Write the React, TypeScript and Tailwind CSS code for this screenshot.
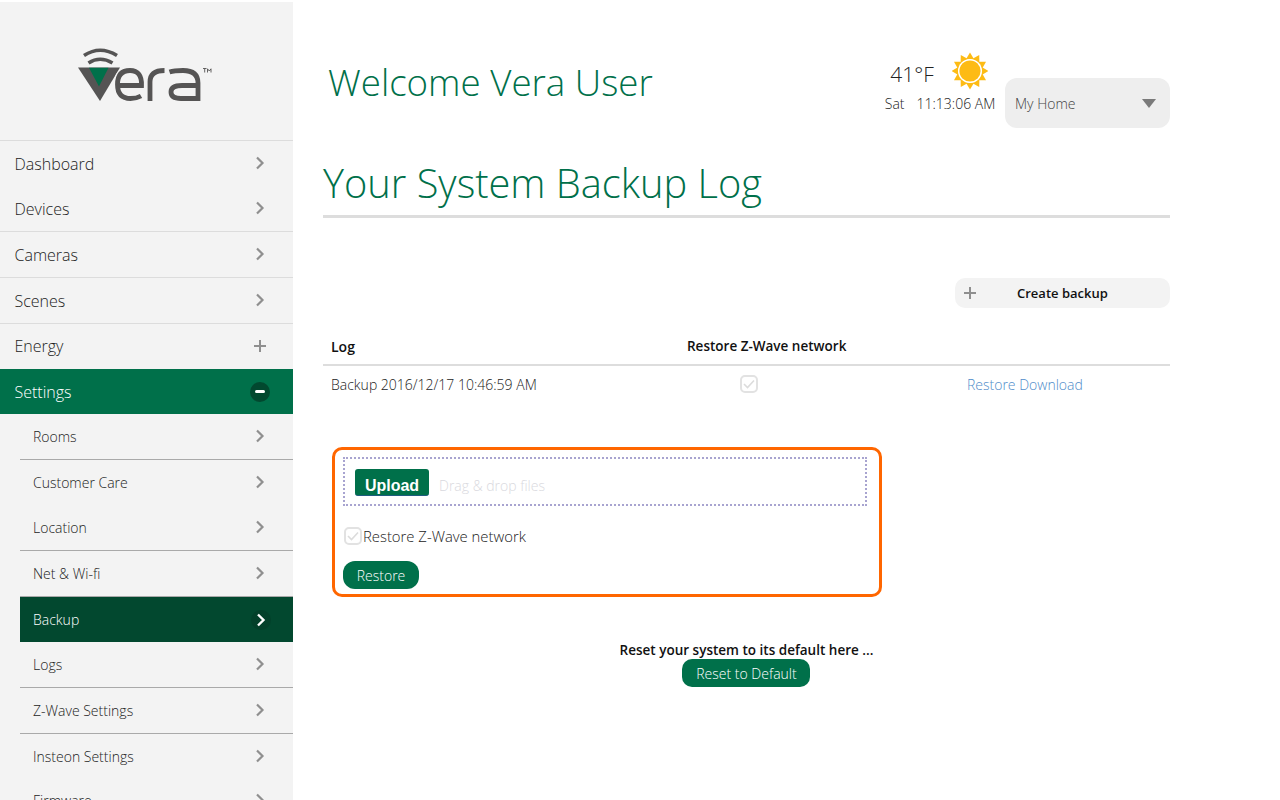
import React from "react";

function Chevron({ white = false }: { white?: boolean }) {
  return (
    <svg width="10" height="14" viewBox="0 0 10 14" fill="none" className={white ? "block" : "block -translate-y-px"}>
      <path d="M2 1.5 L7.5 7 L2 12.5" stroke={white ? "#ffffff" : "#8f8f8f"} strokeWidth={white ? 2.4 : 2.2} />
    </svg>
  );
}

function Logo() {
  return (
    <svg width="150" height="70" viewBox="70 40 150 70" className="block">
      <path d="M84 55.5 Q100 45 117 55.5" fill="none" stroke="#555454" strokeWidth="3.6" />
      <path d="M88.5 63 Q100 55.5 112.5 63" fill="none" stroke="#555454" strokeWidth="3.6" />
      <path d="M78 67.5 H120 L100 101 Z" fill="#555454" />
      <path d="M89 67.8 H108.5 L99 86.5 Z" fill="#00704a" />
      <path d="M118 85.5 H141.5 Q142 70.5 130 70.5 Q117.5 70.5 117.5 84.5 Q117.5 98.5 130.5 98.5 Q136.5 98.5 141 96" fill="none" stroke="#f3f3f3" strokeWidth="7" />
      <path d="M117.5 85.5 H141.5 Q142 70.5 130 70.5 Q117.5 70.5 117.5 84.5 Q117.5 98.5 130.5 98.5 Q136.5 98.5 141 96" fill="none" stroke="#555454" strokeWidth="4.8" />
      <path d="M150 101 V82 Q150 70.5 164.5 70.5" fill="none" stroke="#555454" strokeWidth="4.8" />
      <path d="M169.5 72 Q174 70.5 183 70.5 Q198 70.5 198 83 V101 M198 85.5 H182 Q171 85.5 171 92 Q171 98.5 181 98.5 H198" fill="none" stroke="#555454" strokeWidth="4.8" />
      <path d="M203 68.5 H206.5 M204.7 68.5 V72.5 M207.5 72.5 V68.8 L209.3 71 L211 68.8 V72.5" fill="none" stroke="#555454" strokeWidth="0.9" />
    </svg>
  );
}

function Sun() {
  const rays = Array.from({ length: 12 }, (_, i) => i * 30);
  return (
    <svg width="36" height="38" viewBox="-18 -19 36 38" className="block">
      {rays.map((a) => (
        <polygon key={a} points="-4.2,-11.4 4.2,-11.4 0,-18.5" fill="#fdbb14" transform={`rotate(${a})`} />
      ))}
      <circle r="12" fill="#fff" />
      <circle r="10.6" fill="#fdbb14" />
    </svg>
  );
}

function Check() {
  return (
    <span className="flex h-[18px] w-[18px] shrink-0 items-center justify-center rounded-[5px] border-2 border-[#e2e2e2] bg-white">
      <svg width="12" height="10" viewBox="0 0 12 10" fill="none">
        <path d="M1 5 L4.5 8.5 L11 1.5" stroke="#dcdcdc" strokeWidth="1.6" />
      </svg>
    </span>
  );
}

const subRow = "flex items-center justify-between pl-[13px] pr-[28px] text-[14px] font-light text-[#222]";
const topRow = "flex items-center justify-between pl-[14.5px] pr-[28px] text-[16px] font-light text-[#222]";
const topLine = "border-b border-[#dcdcdc]";
const subLine = "border-b border-[#a9a9a9]";

export default function App() {
  return (
    <div className="flex h-[800px] w-[1280px] overflow-hidden bg-white font-['Open_Sans',sans-serif] text-[#222]">
      <aside className="mt-[2px] h-[798px] w-[293px] shrink-0 overflow-hidden bg-[#f3f3f3]">
        <div className="flex h-[138px] items-start pl-[70px] pt-[38px]">
          <Logo />
        </div>
        <nav className="border-t border-[#dcdcdc]">
          <div className={`${topRow} h-[45px]`}><span>Dashboard</span><Chevron /></div>
          <div className={`${topRow} ${topLine} h-[46px]`}><span>Devices</span><Chevron /></div>
          <div className={`${topRow} ${topLine} h-[46px]`}><span>Cameras</span><Chevron /></div>
          <div className={`${topRow} ${topLine} h-[46px]`}><span>Scenes</span><Chevron /></div>
          <div className={`${topRow} h-[45px] pb-[1px]`}>
            <span>Energy</span>
            <svg width="12" height="12" viewBox="0 0 12 12" className="-mr-[1px] block">
              <path d="M0 6 H12 M6 0 V12" stroke="#8f8f8f" strokeWidth="2" />
            </svg>
          </div>
          <div className="flex h-[45px] items-center justify-between bg-[#00704a] pl-[14.5px] pr-[23px] text-[16px] font-light text-white">
            <span>Settings</span>
            <span className="flex h-[20px] w-[20px] items-center justify-center rounded-full bg-[#02482f]">
              <span className="h-[3px] w-[10px] rounded-[2px] bg-white" />
            </span>
          </div>
          <div className="ml-[20px]">
            <div className={`${subRow} ${subLine} h-[46px]`}><span>Rooms</span><Chevron /></div>
            <div className={`${subRow} h-[45px]`}><span>Customer Care</span><Chevron /></div>
            <div className={`${subRow} ${subLine} h-[46px]`}><span>Location</span><Chevron /></div>
            <div className={`${subRow} ${subLine} h-[46px]`}><span>Net &amp; Wi-fi</span><Chevron /></div>
            <div className="flex h-[45px] items-center justify-between bg-[#02482f] pl-[13px] pr-[22px] text-[14px] font-light text-white">
              <span>Backup</span>
              <span className="flex h-[20px] w-[20px] items-center justify-center rounded-full bg-[#03402a]">
                <Chevron white />
              </span>
            </div>
            <div className={`${subRow} ${subLine} h-[46px]`}><span>Logs</span><Chevron /></div>
            <div className={`${subRow} ${subLine} h-[46px]`}><span>Z-Wave Settings</span><Chevron /></div>
            <div className={`${subRow} h-[45px]`}><span>Insteon Settings</span><Chevron /></div>
            <div className={`${subRow} h-[46px] pb-[3px]`}><span>Firmware</span><Chevron /></div>
          </div>
        </nav>
      </aside>

      <main className="ml-[30px] w-[847px] shrink-0">
        <header className="flex h-[128px] items-start">
          <h1 className="ml-[5px] mt-[57px] flex-1 text-[36.7px] font-light leading-[50px] text-[#00704a]">Welcome Vera User</h1>
          <div className="mt-[52px] flex w-[120px] flex-col items-center pr-[10px]">
            <div className="flex h-[38px] items-center gap-[18px] pr-[2px]">
              <span className="mt-[6px] text-[21px] font-light leading-none text-[#222]">41°F</span>
              <Sun />
            </div>
            <div className="mt-[4px] flex gap-[12px] whitespace-nowrap text-[14px] font-light leading-[20px] text-[#222]">
              <span>Sat</span>
              <span>11:13:06 AM</span>
            </div>
          </div>
          <div className="mt-[78px] flex h-[50px] w-[165px] items-center justify-between rounded-[12px] bg-[#eeeeee] pl-[10px] pr-[14px] text-[14px] text-[#444]">
            <span className="font-light">My Home</span>
            <span className="h-0 w-0 border-x-[7px] border-t-[9px] border-x-transparent border-t-[#7a7a7a]" />
          </div>
        </header>

        <h2 className="mt-[26px] border-b-[3px] border-[#dddddd] pb-[4px] text-[39.8px] font-light leading-[57px] text-[#00704a]">Your System Backup Log</h2>

        <div className="mt-[60px] flex justify-end">
          <div className="flex h-[30px] w-[215px] items-center rounded-[10px] bg-[#f3f3f3] pl-[9px] text-[13px] font-semibold text-[#111]">
            <svg width="12" height="12" viewBox="0 0 12 12" className="block">
              <path d="M0 6 H12 M6 0 V12" stroke="#8f8f8f" strokeWidth="2" />
            </svg>
            <span className="ml-[41px] mt-[2px]">Create backup</span>
          </div>
        </div>

        <div className="mt-[20px] flex h-[38px] items-center border-b-2 border-[#dddddd] pl-[8px] text-[13.5px] font-semibold text-[#111]">
          <span className="w-[356px] text-[14px]">Log</span>
          <span>Restore Z-Wave network</span>
        </div>
        <div className="flex h-[36px] items-center pl-[8px] text-[14px] font-light text-[#222]">
          <span className="w-[409px]">Backup 2016/12/17 10:46:59 AM</span>
          <Check />
          <span className="ml-[209px] text-[#4f8cca]">Restore Download</span>
        </div>

        <section className="ml-[9px] mt-[45px] h-[150px] w-[550px] rounded-[10px] border-[3px] border-[#ff6600] px-[8px] pt-[7px]">
          <div className="flex h-[49px] w-[524px] items-center border-2 border-dotted border-[#a8a4d0] pl-[10px]">
            <span className="mt-[1px] flex h-[27px] w-[74px] items-end justify-center rounded-[3px] border-b border-[#1f5c80] bg-[#00704a] font-['Liberation_Sans',sans-serif] text-[16px] font-bold leading-[18px] text-white">Upload</span>
            <span className="ml-[10px] mt-[8px] text-[14px] font-light text-[#d9d9de]">Drag &amp; drop files</span>
          </div>
          <div className="mt-[19px] flex items-center pl-[1px] font-light text-[#222]">
            <Check />
            <span className="ml-[1px] text-[14.85px]">Restore Z-Wave network</span>
          </div>
          <button className="mt-[14px] block h-[28px] w-[76px] rounded-[12px] bg-[#00704a] text-[14px] font-light text-white">Restore</button>
        </section>

        <div className="mt-[43px] flex flex-col items-center">
          <p className="text-[13.5px] font-semibold leading-[20px] text-[#111]">Reset your system to its default here ...</p>
          <button className="-ml-[2px] -mt-px h-[28px] w-[128px] rounded-[10px] bg-[#00704a] pl-[2px] text-[14px] font-light text-white">Reset to Default</button>
        </div>
      </main>
    </div>
  );
}
